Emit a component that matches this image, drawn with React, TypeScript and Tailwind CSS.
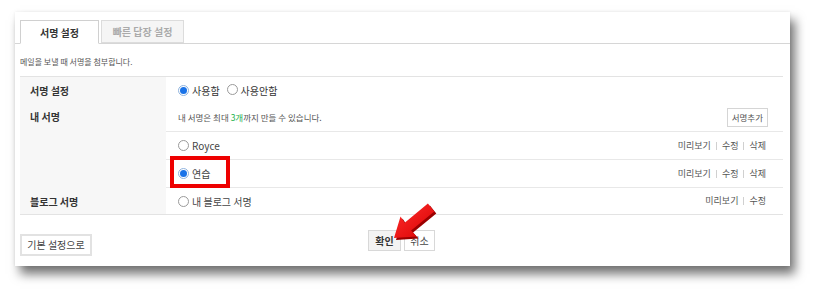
import React from 'react';

const Radio = ({ checked }: { checked?: boolean }) =>
  checked ? (
    <span className="inline-flex items-center justify-center w-[11px] h-[11px] rounded-full border border-[#8fb3de] bg-white shrink-0">
      <span className="w-[7px] h-[7px] rounded-full bg-[#1a73e8]" />
    </span>
  ) : (
    <span className="inline-block w-[11px] h-[11px] rounded-full border border-[#9a9a9a] bg-white shrink-0" />
  );

const Actions = ({ items }: { items: string[] }) => (
  <div className="flex items-center text-[9px] text-[#555]">
    {items.map((it, i) => (
      <React.Fragment key={it}>
        {i > 0 && <span className="mx-[5px] h-[8px] w-px bg-[#d0d0d0]" />}
        <span>{it}</span>
      </React.Fragment>
    ))}
  </div>
);

export default function App() {
  return (
    <div className="relative w-[821px] h-[298px] bg-white font-['Noto_Sans_CJK_KR','Noto_Sans',sans-serif] text-[#333]">
      <div className="pt-[12px] pl-[15px]">
        {/* Card */}
        <div className="w-[775px] h-[254px] bg-white shadow-[5px_8px_10px_rgba(0,0,0,0.55),0_0_3px_rgba(0,0,0,0.08)]">
          {/* Tabs */}
          <div className="pt-[8px] pl-[5px] border-b border-[#d6d6d6] flex gap-[2px]">
            <div className="w-[79px] h-[24px] -mb-px border border-[#d0d0d0] border-b-white bg-white flex items-center justify-center text-[10px] font-bold text-[#333]">
              서명 설정
            </div>
            <div className="w-[83px] h-[23px] border border-[#dcdcdc] bg-[#f5f5f5] flex items-center justify-center text-[10px] font-bold text-[#aaa]">
              빠른 답장 설정
            </div>
          </div>

          <div className="pl-[5px] pr-[7px]">
            <div className="h-[32px] pt-[13px] text-[8px] leading-[10px] text-[#555]">
              메일을 보낼 때 서명을 첨부합니다.
            </div>

            {/* Table */}
            <div className="grid grid-cols-[146px_1fr] border-t border-b border-[#e3e3e3]">
              <div className="bg-[#f7f7f7] h-[26px] pl-[10px] flex items-center text-[10px] font-bold">서명 설정</div>
              <div className="h-[26px] pl-[12px] flex items-center text-[10px] text-[#333]">
                <Radio checked />
                <span className="ml-[3px]">사용함</span>
                <span className="ml-[7px]"><Radio /></span>
                <span className="ml-[3px]">사용안함</span>
              </div>

              <div className="bg-[#f7f7f7] pl-[10px] pt-[7px] text-[10px] font-bold leading-[14px]">내 서명</div>
              <div>
                <div className="h-[29px] pl-[12px] pr-[15px] flex items-center justify-between border-b border-[#e8e8e8]">
                  <span className="text-[8.5px] text-[#555]">
                    내 서명은 최대 <span className="text-[#22b24c]">3개</span>까지 만들 수 있습니다.
                  </span>
                  <span className="h-[19px] px-[4px] border border-[#d5d5d5] flex items-center text-[8.5px] text-[#555]">서명추가</span>
                </div>
                <div className="h-[28px] pl-[12px] pr-[17px] flex items-center justify-between border-b border-[#e8e8e8]">
                  <span className="flex items-center text-[10px] text-[#444]">
                    <Radio />
                    <span className="ml-[3px]">Royce</span>
                  </span>
                  <Actions items={['미리보기', '수정', '삭제']} />
                </div>
                <div className="relative h-[28px] pl-[12px] pr-[17px] flex items-center justify-between border-b border-[#e8e8e8]">
                  <span className="flex items-center text-[10px] text-[#444]">
                    <Radio checked />
                    <span className="ml-[3px]">연습</span>
                  </span>
                  <Actions items={['미리보기', '수정', '삭제']} />
                  <div className="absolute left-[4px] top-[-4px] w-[60px] h-[32px] border-[4px] border-[#ee0000]" />
                </div>
              </div>

              <div className="bg-[#f7f7f7] h-[26px] pl-[10px] flex items-center text-[10px] font-bold">블로그 서명</div>
              <div className="h-[26px] pl-[12px] pr-[17px] flex items-center justify-between">
                <span className="flex items-center text-[10px] text-[#444]">
                  <Radio />
                  <span className="ml-[3px]">내 블로그 서명</span>
                </span>
                <Actions items={['미리보기', '수정']} />
              </div>
            </div>

            {/* Footer */}
            <div className="grid grid-cols-[1fr_auto_1fr] pt-[15px]">
              <div>
                <span className="inline-flex h-[22px] w-[72px] items-center justify-center border-2 border-[#e2e2e2] bg-white text-[10px] text-[#444]">
                  기본 설정으로
                </span>
              </div>
              <div className="flex gap-[3px]">
                <span className="h-[21px] w-[33px] flex items-center justify-center border border-[#d8d8d8] bg-[#f3f3f3] text-[10px] font-bold text-[#333]">확인</span>
                <span className="h-[21px] w-[31px] flex items-center justify-center border border-[#d8d8d8] bg-white text-[10px] text-[#444]">취소</span>
              </div>
              <div />
            </div>
          </div>
        </div>
      </div>

      {/* Red arrow overlay */}
      <svg className="absolute left-0 top-0 pointer-events-none" width="821" height="298" viewBox="0 0 821 298">
        <defs>
          <linearGradient id="ar" x1="0" y1="0" x2="1" y2="1">
            <stop offset="0" stopColor="#ff3030" />
            <stop offset="1" stopColor="#d80000" />
          </linearGradient>
        </defs>
        <polygon
          points="394,238 400.5,216.5 404.7,222.7 427.9,203.6 434.3,211.4 411.1,230.5 416.5,236.5"
          fill="#9b0000"
          transform="translate(2,2)"
        />
        <polygon
          points="394,238 400.5,216.5 404.7,222.7 427.9,203.6 434.3,211.4 411.1,230.5 416.5,236.5"
          fill="url(#ar)"
        />
      </svg>
    </div>
  );
}
